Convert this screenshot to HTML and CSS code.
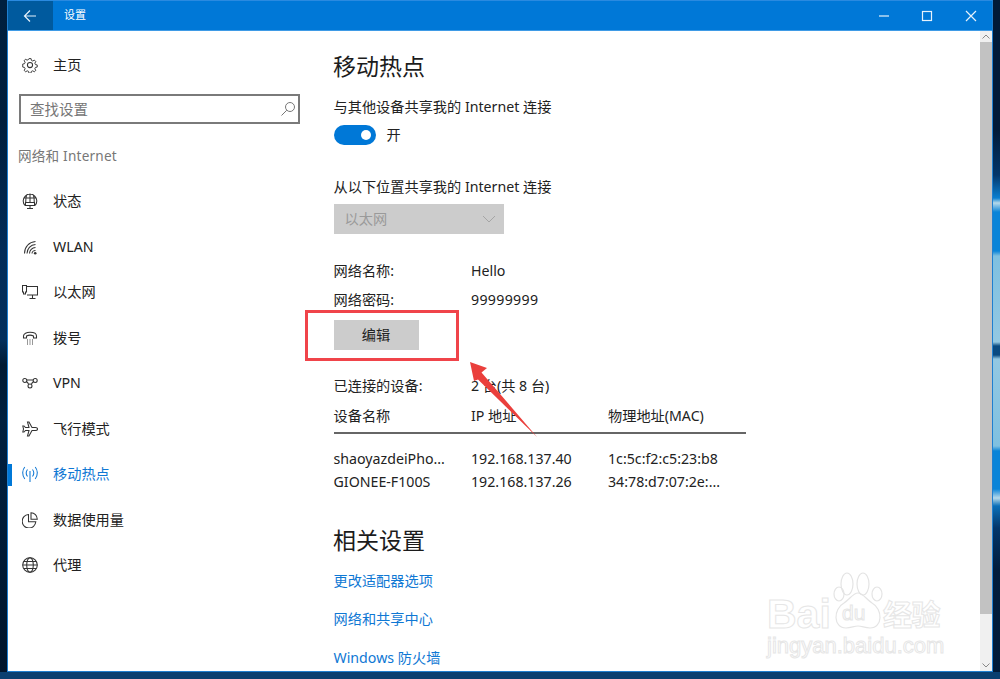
FILE: index.html
```html
<!DOCTYPE html>
<html lang="zh-CN">
<head>
<meta charset="utf-8">
<title>设置</title>
<link rel="stylesheet" href="styles.css">
</head>
<body>
<div class="window">
  <header class="titlebar">
    <button class="back"><svg width="16" height="16" viewBox="0 0 16 16"><path d="M14 8H2.500M8 2.500 2.500 8 8 13.500" class="s-white"/></svg></button>
    <span class="apptitle">设置</span>
    <div class="controls">
      <svg width="43.500" height="29" viewBox="0 0 43.500 29"><path d="M17 15h10" class="s-white"/></svg>
      <svg width="43.500" height="29" viewBox="0 0 43.500 29"><rect x="17.500" y="10.500" width="9" height="9" class="s-white"/></svg>
      <svg width="43.500" height="29" viewBox="0 0 43.500 29"><path d="M17 10l10 10M27 10 17 20" class="s-white"/></svg>
    </div>
  </header>
  <div class="body">
    <nav class="sidebar">
      <div class="navitem home">
        <svg class="ico" viewBox="0 0 16 16"><circle cx="8" cy="8" r="2.600"/><path d="M6.800.800h2.400l.4 2 1.500.7 1.800-1 1.600 1.700-1.100 1.700.7 1.600 2 .4v2.400l-2 .4-.7 1.500 1.100 1.800-1.700 1.600-1.700-1.100-1.600.7-.4 2H6.800l-.4-2-1.600-.7-1.700 1.100-1.700-1.600 1.100-1.800-.7-1.500-2-.4V6.900l2-.4.7-1.600-1.100-1.700L2.900 1.500l1.800 1 1.600-.7z" transform="translate(.9 .9) scale(.89)"/></svg>
        <span>主页</span>
      </div>
      <div class="search"><span>查找设置</span><svg width="16" height="16" viewBox="0 0 16 16"><circle cx="10" cy="6" r="4.500"/><path d="M6.800 9.200 1.500 14.500"/></svg></div>
      <div class="section">网络和 Internet</div>
      <div class="navitem">
        <svg class="ico" viewBox="0 0 16 16"><path d="M3 12.500A6.800 6.800 0 1 1 13 12.500M1.500 5h13M3.500 9.500h9v3h-9zM8 .5v9M4.800 1.500C4 3.500 3.700 7 3.800 9.500M11.200 1.500c.8 2 1.100 5.500 1 8M8 12.500v2.500M5 15.500h6"/></svg>
        <span>状态</span>
      </div>
      <div class="navitem">
        <svg class="ico" viewBox="0 0 16 16"><path d="M2.500 14.500C2.500 8 7 3 13.500 2.500M5 14.500C5 10 8.500 5.500 13.500 5.500M7.500 14.500c0-3 2.500-6 6-6M10 14.500c0-1.500 1.500-3 3.500-3"/><circle cx="13.200" cy="14.200" r="1.300" class="fill"/></svg>
        <span>WLAN</span>
      </div>
      <div class="navitem">
        <svg class="ico" viewBox="0 0 16 16"><path d="M5 2.500h10.500v8.500H5M10.500 11v3M7.500 14.500h6M.5 1.500h4v6.500h-1v2h-2V8h-1z"/></svg>
        <span>以太网</span>
      </div>
      <div class="navitem">
        <svg class="ico" viewBox="0 0 16 16"><path d="M1.500 8V6c0-5 13-5 13 0v2h-3V6c-2-1-5-1-7 0v2z"/><path d="M5 10h1M7.500 10h1M10 10h1M5 12h1M7.500 12h1M10 12h1M5 14h1M7.500 14h1M10 14h1"/></svg>
        <span>拨号</span>
      </div>
      <div class="navitem">
        <svg class="ico" viewBox="0 0 16 16"><circle cx="2.800" cy="5.500" r="2"/><circle cx="13.200" cy="5.500" r="2"/><circle cx="8" cy="11" r="2"/><path d="M4.500 6.500c1 .8 2 2 2.200 3M11.500 6.500c-1 .8-2 2-2.200 3M5 5h6"/></svg>
        <span>VPN</span>
      </div>
      <div class="navitem">
        <svg class="ico" viewBox="0 0 16 16"><path d="M15.500 8c0-1-1-1.500-2-1.500H10L7 1H5.500L7 6.500H3.500L2 5H.8l.7 3-.7 3H2l1.500-1.500H7L5.500 15H7l3-5.500h3.500c1 0 2-.5 2-1.500z"/></svg>
        <span>飞行模式</span>
      </div>
      <div class="navitem active">
        <i class="marker"></i>
        <svg class="ico" viewBox="0 0 16 16"><path d="M8 5v11M5.500 3.500c-1.500 2-1.500 5 0 7M10.500 3.500c1.500 2 1.500 5 0 7M2.800 1C.2 4-.2 9 2.800 13M13.200 1c2.600 3 3 8 0 12"/></svg>
        <span>移动热点</span>
      </div>
      <div class="navitem">
        <svg class="ico" viewBox="0 0 16 16"><path d="M6.500 2.500a6.800 6.800 0 1 0 7.300 7.300H6.500z"/><path d="M9 .8a6.500 6.500 0 0 1 6.300 6.400H9z"/></svg>
        <span>数据使用量</span>
      </div>
      <div class="navitem">
        <svg class="ico" viewBox="0 0 16 16"><circle cx="8" cy="8" r="7.300"/><ellipse cx="8" cy="8" rx="3.300" ry="7.300"/><path d="M.7 8h14.600M1.700 4.500h12.600M1.700 11.500h12.600"/></svg>
        <span>代理</span>
      </div>
    </nav>
    <main class="main">
      <h1 class="title">移动热点</h1>
      <div class="line gap14">与其他设备共享我的 Internet 连接</div>
      <div class="toggle-row"><i class="toggle"><b></b></i><span>开</span></div>
      <div class="line gap32">从以下位置共享我的 Internet 连接</div>
      <div class="select"><span>以太网</span><svg width="14" height="8" viewBox="0 0 14 8"><path d="M1 1l6 6 6-6"/></svg></div>
      <div class="info gap27"><span>网络名称:</span><span>Hello</span></div>
      <div class="info gap9"><span>网络密码:</span><span class="digits">99999999</span></div>
      <button class="edit">编辑</button>
      <div class="info gap26"><span>已连接的设备:</span><span>2 台(共 8 台)</span></div>
      <div class="info gap10 head"><span>设备名称</span><span>IP 地址</span><span>物理地址(MAC)</span></div>
      <div class="info gap15"><span>shaoyazdeiPho...</span><span>192.168.137.40</span><span>1c:5c:f2:c5:23:b8</span></div>
      <div class="info gap3"><span>GIONEE-F100S</span><span>192.168.137.26</span><span>34:78:d7:07:2e:...</span></div>
      <h2 class="title gap31">相关设置</h2>
      <a class="line link gap14">更改适配器选项</a>
      <a class="line link gap18">网络和共享中心</a>
      <a class="line link gap19">Windows 防火墙</a>
    </main>
    <div class="scrollbar">
      <div class="sb-btn"><svg width="8" height="5" viewBox="0 0 8 5"><path d="M.5 4.500 4 1l3.500 3.500"/></svg></div>
      <div class="sb-thumb"></div>
      <div class="sb-track"></div>
      <div class="sb-btn"><svg width="8" height="5" viewBox="0 0 8 5"><path d="M.5.500 4 4 7.500.500"/></svg></div>
    </div>
  </div>
</div>
<div class="redbox"></div>
<svg class="arrow" width="80" height="90" viewBox="0 0 80 90"><polygon points="4,2 21,8 15.500,12.500 71,77 12,19.500 8,21"/></svg>
<div class="mark">
  <svg class="paw" width="56" height="62" viewBox="0 0 56 62"><ellipse cx="17" cy="13" rx="6" ry="11"/><ellipse cx="33" cy="13" rx="6" ry="11"/><ellipse cx="9" cy="23" rx="5" ry="7"/><ellipse cx="47" cy="23" rx="5" ry="7"/><path d="M28 22c-5 0-8 6-14 10C3 38 3 57 16 57c5 0 8-2 12-2s7 2 12 2c13 0 13-19 2-25-6-4-9-10-14-10z"/></svg>
  <span class="mk-bai">Bai</span><span class="mk-du">du</span><span class="mk-cn">经验</span>
  <span class="mk-url">jingyan.baidu.com</span>
</div>
</body>
</html>
```
FILE: styles.css
```css
* { box-sizing: border-box; }
html, body { height: 100%; }
body {
  margin: 0;
  height: 679px;
  overflow: hidden;
  position: relative;
  padding: 0 7px 7px;
  font: 14.2px/20px "Noto Sans", "Noto Sans CJK SC", sans-serif;
  color: #222;
  background-color: #0a3f70;
  background-repeat: no-repeat;
  background-size: 7px 672px, 7px 672px;
  background-position: 0 0, 993px 0;
  background-image:
    linear-gradient(180deg, #00203f 0, #001e3c 120px, #022c58 250px, #022f5c 340px, #001a33 365px, #00203f 420px, #00152c 672px),
    linear-gradient(180deg, #011a38 0, #011a38 130px, #03366a 175px, #0a7fd0 198px, #b5d9ea 203px, #0a84d8 212px, #0a84d8 251px, #7fc0e0 256px, #93c8e2 342px, #0a4a80 346px, #0a4a80 355px, #93c8e2 359px, #7fc0e0 446px, #0a84d8 451px, #0a84d8 489px, #b5d9ea 498px, #0a6fb8 506px, #03366a 528px, #011d3c 570px, #011a38 672px);
}
svg { display: block; fill: none; stroke: currentColor; }
.window {
  height: 672px;
  display: flex;
  flex-direction: column;
  background: #fff;
  border: 1px solid #1f7fd0;
  border-top-color: #2a8ae0;
}
.titlebar {
  height: 30px;
  flex: none;
  display: flex;
  align-items: flex-start;
  background: #0078d7;
  color: #fff;
  border-bottom: 1px solid #3f9be6;
  font-size: 11px;
  line-height: 28px;
}
.s-white { stroke: #e6f2fb; fill: none; stroke-width: 1.200; }
.back {
  width: 45px;
  height: 29px;
  border: 0;
  padding: 0 0 0 14px;
  background: #005a9e;
  margin-right: 11px;
}
.apptitle { flex: 1; }
.controls { display: flex; }
.body { flex: 1; display: flex; min-height: 0; }
.sidebar { width: 299px; flex: none; padding-top: 11px; display: flex; flex-direction: column; }
.navitem {
  position: relative;
  height: 45.500px;
  flex: none;
  display: flex;
  align-items: center;
  padding-left: 13.500px;
  gap: 15.500px;
  color: #222;
}
.navitem.home { height: 45px; margin-bottom: 7px; }
.ico { width: 16px; height: 16px; flex: none; stroke: #333; stroke-width: 1.050; }
.ico .fill { fill: #333; stroke: none; }
.active { color: #0f78d4; }
.active .ico { stroke: #0f78d4; }
.marker { position: absolute; left: 0; top: 12px; width: 4px; height: 22px; background: #0078d7; }
.search {
  margin-left: 11px;
  width: 281px;
  height: 30px;
  border: 2px solid #7a7a7a;
  display: flex;
  align-items: center;
  justify-content: space-between;
  padding: 0 2px 0 9px;
  color: #767676;
  font-size: 14.500px;
}
.search svg { stroke: #777; stroke-width: 1; }
.section { margin: 21px 0 12.500px 10px; height: 21px; color: #777; font-size: 13.600px; line-height: 21px; letter-spacing: .2px; }
.main { flex: 1; padding: 18px 0 0 26.500px; min-width: 0; overflow: hidden; }
.title { margin: 0 0 0 -.5px; height: 34px; line-height: 34px; font-size: 23px; font-weight: 400; color: #1c1c1c; }
.line { display: block; height: 20px; }
.link { color: #0f78d4; }
.digits { letter-spacing: .3px; }
.gap3 { margin-top: 3px; }
.gap9 { margin-top: 9px; }
.gap10 { margin-top: 10px; }
.gap14 { margin-top: 14px; }
.gap15 { margin-top: 15px; }
.gap18 { margin-top: 18px; }
.gap19 { margin-top: 19px; }
.gap26 { margin-top: 26px; }
.gap27 { margin-top: 27px; }
.gap31 { margin-top: 31px; }
.gap32 { margin-top: 32px; }
.toggle-row { margin-top: 8px; height: 20px; display: flex; align-items: center; gap: 11px; }
.toggle { width: 42px; height: 20px; border-radius: 10px; background: #0078d7; display: flex; align-items: center; justify-content: flex-end; padding-right: 5px; }
.toggle b { width: 10px; height: 10px; border-radius: 50%; background: #fff; }
.select {
  margin-top: 7px;
  width: 170px;
  height: 30px;
  background: #cccccc;
  color: #9a9a9a;
  display: flex;
  align-items: center;
  justify-content: space-between;
  padding: 0 8px 0 11px;
}
.select svg { stroke: #a5a5a5; }
.info { display: grid; grid-template-columns: 137.500px 137px 137.500px; width: 412px; height: 20px; white-space: nowrap; }
.head { height: 28px; border-bottom: 2px solid #666; }
.edit {
  display: block;
  margin-top: 10px;
  width: 85px;
  height: 30px;
  border: 0;
  padding: 0;
  background: #cccccc;
  color: #222;
  font: inherit;
}
.scrollbar { width: 12px; flex: none; display: flex; flex-direction: column; background: #f0f0f0; }
.sb-btn { height: 11px; flex: none; display: flex; align-items: center; justify-content: center; background: #f0f0f0; color: #888; }
.sb-thumb { height: 572px; flex: none; background: #c2c2c2; }
.sb-track { flex: 1; }
.redbox { position: absolute; left: 305px; top: 310px; width: 154px; height: 51px; border: 3px solid #f0444a; }
.arrow { position: absolute; left: 466px; top: 360px; stroke: none; fill: #ea3f3c; }
.mark { position: absolute; left: 767px; top: 571px; width: 190px; height: 95px; color: transparent; -webkit-text-stroke: 1px #e6e6e6; font-family: "Liberation Sans", sans-serif; }
.paw { position: absolute; left: 63px; top: 0; stroke: #e4e4e4; stroke-width: 1.200; }
.mk-bai { position: absolute; left: 0; top: 21px; font-size: 41px; line-height: 44px; font-weight: 700; }
.mk-du { position: absolute; left: 75px; top: 30px; font-size: 21px; line-height: 24px; }
.mk-cn { position: absolute; left: 116px; top: 26px; font: 700 29px/32px "Noto Sans CJK SC", sans-serif; letter-spacing: -.5px; }
.mk-url { position: absolute; left: 0; top: 62px; font-size: 22px; line-height: 26px; }
```
